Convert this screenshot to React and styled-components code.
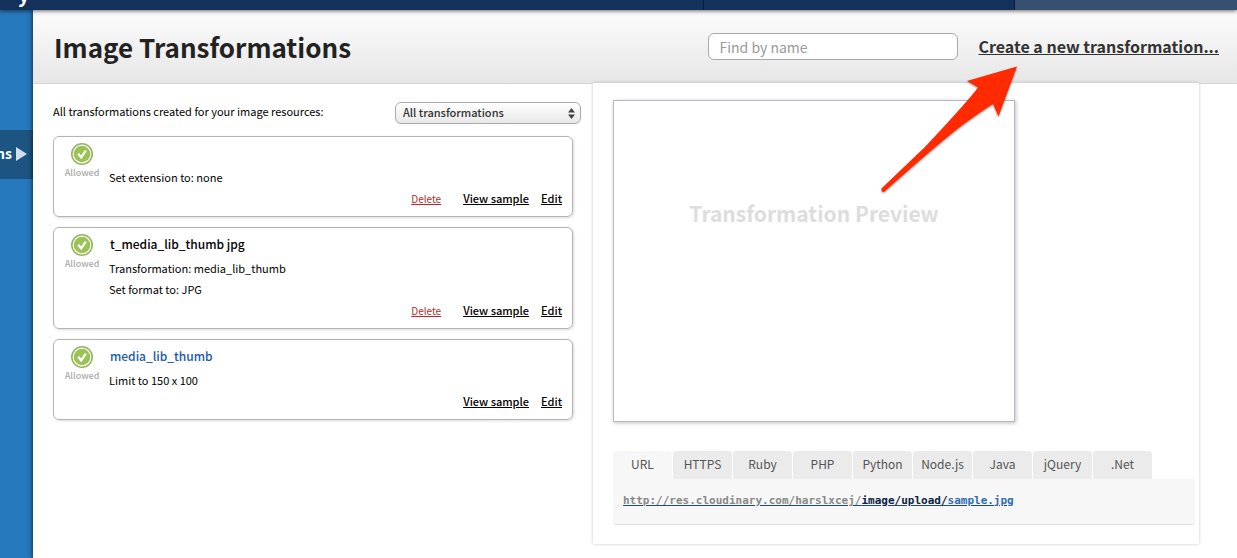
import React from "react";
import styled, { createGlobalStyle } from "styled-components";

const sans = `"Noto Sans CJK SC", "Open Sans", sans-serif`;
const mono = `"DejaVu Sans Mono", "Liberation Mono", monospace`;

const GlobalStyle = createGlobalStyle`
  *, *::before, *::after { box-sizing: border-box; }
  body { margin: 0; background: #fff; color: #000; font: 11px/21px ${sans}; }
  h1, h2, p, ul { margin: 0; padding: 0; }
  a { color: inherit; }
`;

const Page = styled.div`
  display: flex;
  flex-direction: column;
  min-height: 100vh;
  position: relative;
  overflow: hidden;
`;

const TopBar = styled.header`
  display: flex;
  height: 10px;
  background: #13315b;
  position: relative;
  z-index: 1;
  box-shadow: 0 1px 4px rgba(0, 0, 0, 0.6);
`;

const Brand = styled.a`
  flex: 1;
  display: flex;
  align-items: flex-end;
  padding: 0 0 6px 18px;
  overflow: hidden;
  color: #fff;
  font-size: 20px;
  font-weight: 700;
  line-height: 20px;
  text-decoration: none;
`;

const TopSection = styled.div`
  width: ${(p) => p.$width};
  border-left: 1px solid #06193a;
  background: ${(p) => (p.$light ? "#38506f" : "transparent")};
`;

const Body = styled.div`
  display: flex;
  flex: 1;
`;

const Sidebar = styled.nav`
  width: 33px;
  flex: none;
  padding-top: 120px;
  background: #2779bd;
`;

const NavItem = styled.a`
  display: flex;
  align-items: center;
  justify-content: flex-end;
  gap: 4px;
  height: 49px;
  padding: 0 6px 2px 0;
  background: #1c5482;
  color: #fff;
  font-size: 14px;
  font-weight: 700;
  text-decoration: none;
  overflow: hidden;
  svg { flex: none; }
`;

const Main = styled.main`
  flex: 1;
  min-width: 0;
  box-shadow: 0 0 5px rgba(0, 0, 0, 0.8);
`;

const TitleBar = styled.div`
  display: flex;
  align-items: center;
  gap: 20px;
  height: 74px;
  padding: 0 18px 0 21px;
  border-bottom: 1px solid #d4d4d4;
  background: linear-gradient(#fdfdfd, #e6e6e6);
`;

const Title = styled.h1`
  flex: 1;
  color: #222;
  font-size: 26px;
  font-weight: 700;
  line-height: 40px;
`;

const Search = styled.input`
  width: 250px;
  height: 27px;
  padding: 0 10px;
  border: 1px solid #aaa;
  border-radius: 6px;
  background: #fff;
  font: 14px ${sans};
  &::placeholder { color: #999; opacity: 1; }
`;

const CreateLink = styled.a`
  color: #333;
  font-size: 16px;
  font-weight: 700;
`;

const Columns = styled.div`
  display: flex;
  align-items: flex-start;
  padding-right: 38px;
`;

const ListColumn = styled.section`
  width: 560px;
  flex: none;
  padding: 18px 12px 0 20px;
`;

const FilterRow = styled.div`
  display: flex;
  align-items: flex-start;
  justify-content: space-between;
  height: 22px;
  margin-bottom: 12px;
  line-height: 18px;
`;

const SelectBox = styled.span`
  display: grid;
  align-items: center;
  width: 186px;
  > * { grid-area: 1 / 1; }
  svg { justify-self: end; margin-right: 6px; pointer-events: none; }
`;

const Select = styled.select`
  appearance: none;
  height: 22px;
  padding: 0 20px 2px 7px;
  border: 1px solid #aaa;
  border-radius: 6px;
  background: linear-gradient(#fff, #e8e8e8);
  color: #333;
  font: 500 11px ${sans};
`;

const Cards = styled.ul`
  display: flex;
  flex-direction: column;
  gap: 10px;
  margin-right: 8px;
  list-style: none;
`;

const Card = styled.li`
  display: flex;
  padding: 5px 10px 7px;
  border: 1px solid #b4b4b4;
  border-radius: 6px;
  box-shadow: 1px 1px 3px rgba(0, 0, 0, 0.15);
`;

const Status = styled.div`
  display: flex;
  flex-direction: column;
  align-items: center;
  width: 36px;
  margin-right: 9px;
  color: #aaa;
  font-size: 9px;
  font-weight: 500;
  line-height: 14px;
`;

const CardBody = styled.div`
  flex: 1;
`;

const CardName = styled.h2`
  height: 22px;
  margin-bottom: 3px;
  padding-left: 1px;
  color: ${(p) => (p.$link ? "#2059a8" : "#000")};
  font-size: 12px;
  font-weight: 500;
  line-height: 21px;
`;

const Actions = styled.div`
  display: flex;
  justify-content: flex-end;
  gap: 12px;
`;

const Action = styled.a`
  color: ${(p) => (p.$danger ? "#b0302c" : "#000")};
  font-size: ${(p) => (p.$danger ? "10px" : "11px")};
  font-weight: ${(p) => (p.$danger ? 400 : 500)};
  margin-right: ${(p) => (p.$danger ? "10px" : 0)};
`;

const Panel = styled.section`
  flex: 1;
  min-width: 0;
  margin-top: -1px;
  padding: 17px 4px 19px 20px;
  background: #fff;
  box-shadow: 0 0 3px rgba(0, 0, 0, 0.22);
`;

const Preview = styled.div`
  max-width: 402px;
  height: 322px;
  padding-top: 96px;
  border: 1px solid #b4b9c4;
  box-shadow: 1px 1px 4px rgba(0, 0, 0, 0.25);
  color: #ddd;
  font-size: 21px;
  font-weight: 700;
  line-height: 32px;
  text-align: center;
`;

const Tabs = styled.div`
  display: flex;
  gap: 1px;
  margin-top: 29px;
`;

const Tab = styled.button`
  width: 59px;
  height: 28px;
  padding: 0 0 4px;
  border: 0;
  border-radius: 3px 3px 0 0;
  background: ${(p) => (p.$active ? "#f7f7f7" : "#ebebeb")};
  color: #555;
  font: 12px ${sans};
`;

const Code = styled.div`
  height: 46px;
  padding: 11px 10px;
  border-bottom: 1px solid #ddd;
  border-radius: 0 3px 3px 3px;
  background: #f7f7f7;
  font: 700 11px/21px ${mono};
`;

const Url = styled.a`
  color: #1b4b85;
`;

const UrlPart = styled.span`
  color: ${(p) => p.$color};
`;

const Arrow = styled.svg`
  position: absolute;
  top: 60px;
  right: 212px;
  z-index: 2;
  pointer-events: none;
  filter: drop-shadow(0 1px 1px rgba(0, 0, 0, 0.4));
`;

const transformations = [
  { name: "", lines: ["Set extension to: none"], canDelete: true },
  {
    name: "t_media_lib_thumb jpg",
    lines: ["Transformation: media_lib_thumb", "Set format to: JPG"],
    canDelete: true,
  },
  { name: "media_lib_thumb", link: true, lines: ["Limit to 150 x 100"] },
];

const tabs = ["URL", "HTTPS", "Ruby", "PHP", "Python", "Node.js", "Java", "jQuery", ".Net"];

function AllowedIcon() {
  return (
    <svg width="24" height="24" viewBox="0 0 24 24" aria-hidden="true">
      <circle cx="12" cy="12" r="10.2" fill="#fff" stroke="#93b55e" strokeWidth="1.6" />
      <circle cx="12" cy="12" r="8.3" fill="#9bc254" />
      <path d="M8.2 11.8l3 3.6 4.6-6.8" fill="none" stroke="#fff" strokeWidth="2.3" />
    </svg>
  );
}

export default function App() {
  return (
    <>
      <GlobalStyle />
      <Page>
        <TopBar>
          <Brand href="#">y</Brand>
          <TopSection $width="311px" />
          <TopSection $width="223px" $light />
        </TopBar>
        <Body>
          <Sidebar>
            <NavItem href="#">
              ns
              <svg width="11" height="14" viewBox="0 0 11 14" aria-hidden="true">
                <path d="M0 0L11 7L0 14Z" fill="#d3e0ec" />
              </svg>
            </NavItem>
          </Sidebar>
          <Main>
            <TitleBar>
              <Title>Image Transformations</Title>
              <Search type="text" placeholder="Find by name" aria-label="Find by name" />
              <CreateLink href="#">Create a new transformation...</CreateLink>
            </TitleBar>
            <Columns>
              <ListColumn>
                <FilterRow>
                  <label htmlFor="filter">All transformations created for your image resources:</label>
                  <SelectBox>
                    <Select id="filter">
                      <option>All transformations</option>
                    </Select>
                    <svg width="7" height="11" viewBox="0 0 7 11" aria-hidden="true">
                      <path d="M0 4.5L3.5 0L7 4.5ZM0 6.5L3.5 11L7 6.5Z" fill="#444" />
                    </svg>
                  </SelectBox>
                </FilterRow>
                <Cards>
                  {transformations.map((t) => (
                    <Card key={t.lines[0]}>
                      <Status>
                        <AllowedIcon />
                        Allowed
                      </Status>
                      <CardBody>
                        <CardName $link={t.link}>{t.name}</CardName>
                        {t.lines.map((line) => (
                          <p key={line}>{line}</p>
                        ))}
                        <Actions>
                          {t.canDelete && <Action href="#" $danger>Delete</Action>}
                          <Action href="#">View sample</Action>
                          <Action href="#">Edit</Action>
                        </Actions>
                      </CardBody>
                    </Card>
                  ))}
                </Cards>
              </ListColumn>
              <Panel>
                <Preview>Transformation Preview</Preview>
                <Tabs role="tablist">
                  {tabs.map((tab, i) => (
                    <Tab key={tab} type="button" role="tab" aria-selected={i === 0} $active={i === 0}>
                      {tab}
                    </Tab>
                  ))}
                </Tabs>
                <Code>
                  <Url href="#">
                    <UrlPart $color="#888">http://res.cloudinary.com/harslxcej/</UrlPart>
                    <UrlPart $color="#0b2344">image/upload/</UrlPart>
                    <UrlPart $color="#2f6db3">sample.jpg</UrlPart>
                  </Url>
                </Code>
              </Panel>
            </Columns>
          </Main>
        </Body>
        <Arrow width="150" height="140" viewBox="875 60 150 140" aria-hidden="true">
          <path
            d="M1017 66.5L967 81L978 87.5Q970 99 925 147L881.5 188.5Q881 192 884 192Q940 142 964 124Q982 111 993 104L998.5 116.5Z"
            fill="#ff2a00"
          />
        </Arrow>
      </Page>
    </>
  );
}
